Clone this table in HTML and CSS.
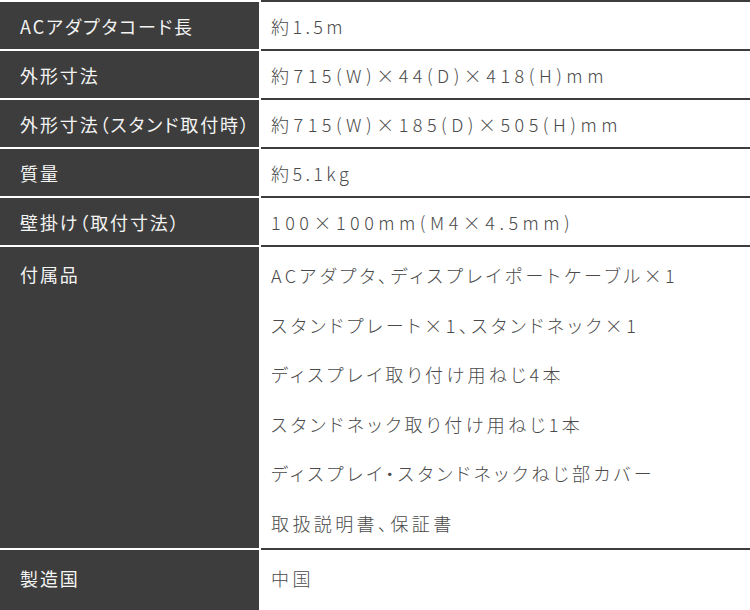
FILE: index.html
```html
<!DOCTYPE html>
<html lang="ja">
<head>
<meta charset="utf-8">
<title>仕様</title>
<link rel="stylesheet" href="styles.css">
</head>
<body>
<table class="spec">
  <tbody>
    <tr>
      <th>ACアダプタコード長</th>
      <td>約1.5m</td>
    </tr>
    <tr>
      <th>外形寸法</th>
      <td class="dim">約715(W)×44(D)×418(H)mm</td>
    </tr>
    <tr>
      <th>外形寸法（スタンド取付時）</th>
      <td class="dim">約715(W)×185(D)×505(H)mm</td>
    </tr>
    <tr>
      <th>質量</th>
      <td>約5.1kg</td>
    </tr>
    <tr>
      <th>壁掛け（取付寸法）</th>
      <td class="dim">100×100mm(M4×4.5mm)</td>
    </tr>
    <tr class="multi">
      <th>付属品</th>
      <td>
        <ul class="items">
          <li>ACアダプタ、ディスプレイポートケーブル×1</li>
          <li>スタンドプレート×1、スタンドネック×1</li>
          <li>ディスプレイ取り付け用ねじ4本</li>
          <li>スタンドネック取り付け用ねじ1本</li>
          <li>ディスプレイ・スタンドネックねじ部カバー</li>
          <li>取扱説明書、保証書</li>
        </ul>
      </td>
    </tr>
    <tr class="last">
      <th>製造国</th>
      <td>中国</td>
    </tr>
  </tbody>
</table>
</body>
</html>
```

FILE: styles.css
```css
html, body {
  margin: 0;
  padding: 0;
  background: #ffffff;
}

.spec {
  width: 750px;
  border-collapse: separate;
  border-spacing: 0;
  font-family: "Noto Sans CJK JP", "Noto Sans", sans-serif;
  font-feature-settings: "palt" 1;
}

.spec th,
.spec td {
  height: 47px;
  padding: 0;
  vertical-align: middle;
  text-align: left;
}

.spec th {
  width: 239px;
  padding-left: 20px;
  background: #3d3d3d;
  color: #f4f4f4;
  font-size: 18px;
  font-weight: 400;
  letter-spacing: 1.9px;
  border-top: 2px solid #ffffff;
  border-right: 2px solid #ffffff;
  white-space: nowrap;
}

.spec td {
  padding-left: 10px;
  color: #4a4a4a;
  font-size: 18px;
  font-weight: 300;
  letter-spacing: 3.4px;
  border-top: 2px solid #3d3d3d;
  white-space: nowrap;
}

.spec td.dim {
  letter-spacing: 4.5px;
}

.spec .multi th {
  vertical-align: top;
  padding-top: 14px;
  height: auto;
}

.spec .multi td {
  height: auto;
  vertical-align: top;
}

.items {
  list-style: none;
  margin: 0;
  padding: 4px 0 0 0;
}

.items li {
  line-height: 49.5px;
}

.spec .last th,
.spec .last td {
  height: 58px;
  vertical-align: top;
  padding-top: 15px;
}
```
